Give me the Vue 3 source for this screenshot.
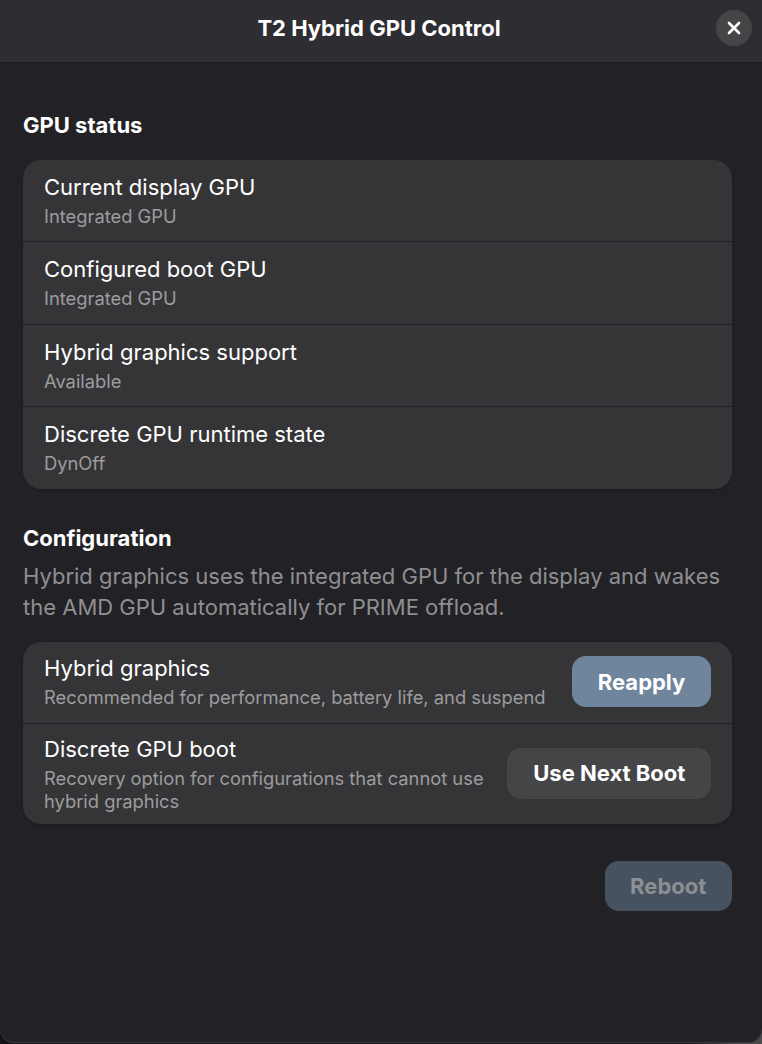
<script setup>
const statusRows = [
  { title: 'Current display GPU', sub: 'Integrated GPU' },
  { title: 'Configured boot GPU', sub: 'Integrated GPU' },
  { title: 'Hybrid graphics support', sub: 'Available' },
  { title: 'Discrete GPU runtime state', sub: 'DynOff' },
]
</script>

<template>
  <div class="window">
    <header class="header">
      <h1 class="title">T2 Hybrid GPU Control</h1>
      <button class="close" aria-label="Close">
        <svg width="14" height="14" viewBox="0 0 14 14"><path d="M2 2 12 12M12 2 2 12" stroke="#fff" stroke-width="2.6" stroke-linecap="round" fill="none"/></svg>
      </button>
    </header>
    <main class="content">
      <h2 class="section">GPU status</h2>
      <div class="card status">
        <div v-for="r in statusRows" :key="r.title" class="row">
          <div class="row-title">{{ r.title }}</div>
          <div class="row-sub">{{ r.sub }}</div>
        </div>
      </div>
      <h2 class="section config">Configuration</h2>
      <p class="desc">Hybrid graphics uses the integrated GPU for the display and wakes the AMD GPU automatically for PRIME offload.</p>
      <div class="card actions">
        <div class="row action first">
          <div class="texts">
            <div class="row-title">Hybrid graphics</div>
            <div class="row-sub">Recommended for performance, battery life, and suspend</div>
          </div>
          <button class="btn blue">Reapply</button>
        </div>
        <div class="row action second">
          <div class="texts">
            <div class="row-title">Discrete GPU boot</div>
            <div class="row-sub">Recovery option for configurations that cannot use hybrid graphics</div>
          </div>
          <button class="btn gray">Use Next Boot</button>
        </div>
      </div>
      <div class="footer">
        <button class="btn reboot">Reboot</button>
      </div>
    </main>
  </div>
</template>

<style>
html, body { margin: 0; background: linear-gradient(90deg, #151518 0 90%, #4a4a4c 97%); }
</style>

<style scoped>
.window {
  width: 762px;
  height: 1043px;
  overflow: hidden;
  background: #222226;
  color: #fff;
  font-family: Inter, "Noto Sans", sans-serif;
  box-sizing: border-box;
  display: flex;
  flex-direction: column;
  border-radius: 0 0 14px 14px;
  box-shadow: inset 0 -1px #38383b;
}
.header {
  height: 63px;
  flex: none;
  box-sizing: border-box;
  padding: 0 4px 6px 0;
  background: #2e2e32;
  border-bottom: 1px solid #1c1c1f;
  display: flex;
  align-items: center;
  justify-content: center;
  position: relative;
}
.title { margin: 0; font-size: 22px; font-weight: 700; line-height: 1; }
.close {
  position: absolute;
  right: 10px;
  top: 10px;
  width: 36px;
  height: 36px;
  border: 0;
  border-radius: 50%;
  padding: 0;
  background: #454548;
  display: flex;
  align-items: center;
  justify-content: center;
}
.content { padding: 0 29.7px 0 23px; display: flex; flex-direction: column; }
.section { margin: 49px 0 0; font-size: 22px; font-weight: 700; line-height: 26px; }
.section.config { margin-top: 36px; }
.card {
  background: #353537;
  border-radius: 18px;
  box-shadow: 0 1px 3px rgba(0,0,0,.25);
  overflow: hidden;
}
.status { margin-top: 22px; }
.actions { margin-top: 19px; }
.row {
  box-sizing: border-box;
  height: 82.25px;
  padding: 13.05px 21px 0;
  border-bottom: 1px solid #222226;
}
.row:last-child { border-bottom: 0; }
.row-title { font-size: 22px; line-height: 28px; color: #fff; }
.row-sub { font-size: 18.33px; line-height: 23px; color: #9c9c9e; margin-top: 4.1px; }
.desc { margin: 10px 0 0; font-size: 22px; line-height: 31px; color: #8f8f92; }
.action { display: flex; align-items: center; justify-content: space-between; padding: 0 21px; }
.action.first { height: 82px; }
.action.second { height: 100px; }
.action.first .row-sub { margin-top: 3.5px; }
.action.second .row-sub { margin-top: 3.5px; }
.action.first .texts { margin-bottom: 2px; }
.action.second .texts { margin-bottom: 0; }
.action .btn { margin-bottom: 2px; }
.texts { flex: 1; min-width: 0; }
.btn {
  flex: none;
  font-family: inherit;
  font-size: 22px;
  font-weight: 700;
  height: 51px;
  border: 0;
  border-radius: 14px;
  color: #fff;
  padding: 0 26px;
}
.blue { background: #6f859d; }
.gray { background: #454548; margin-left: 22px; }
.footer { display: flex; justify-content: flex-end; margin-top: 37px; }
.reboot { background: #46525f; color: #8d8f92; height: 50px; padding: 0 26px 0 25.4px; }
</style>
